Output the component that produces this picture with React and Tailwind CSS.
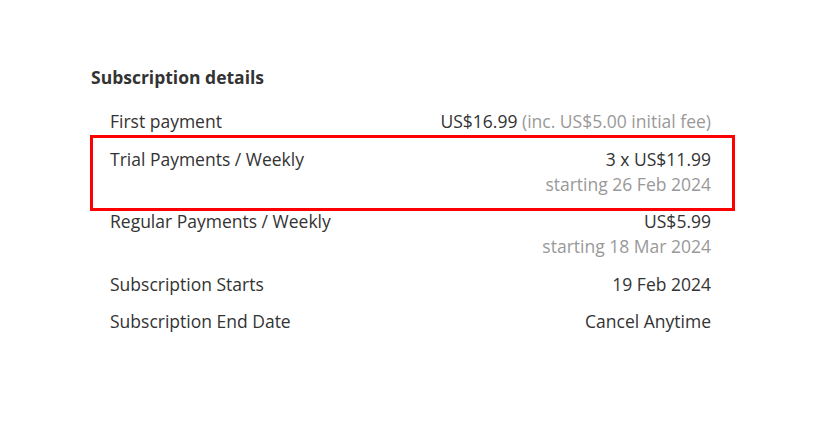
const rows = [
  { label: "First payment", value: "US$16.99", note: "(inc. US$5.00 initial fee)", inline: true },
  { label: "Trial Payments / Weekly", value: "3 x US$11.99", sub: "starting 26 Feb 2024", highlight: true },
  { label: "Regular Payments / Weekly", value: "US$5.99", sub: "starting 18 Mar 2024" },
  { label: "Subscription Starts", value: "19 Feb 2024" },
  { label: "Subscription End Date", value: "Cancel Anytime" },
];

const Row = ({ row }) => (
  <div className="relative flex justify-between py-[6.25px]">
    {row.highlight && (
      <div className="absolute top-[-6px] bottom-[-8px] left-[-20px] right-[-24px] border-[3px] border-[#ff0000] pointer-events-none" />
    )}
    <div>{row.label}</div>
    <div className="text-right">
      <div>
        {row.value}
        {row.inline && <span className="text-[#999999]"> {row.note}</span>}
      </div>
      {row.sub && <div className="text-[#999999]">{row.sub}</div>}
    </div>
  </div>
);

export default function App() {
  return (
    <div className="min-h-[433px] w-[832px] bg-white pt-[65px] text-[17.5px] leading-[25px] text-[#333333] font-['Open_Sans',sans-serif]">
      <div className="ml-[91px] w-[644px]">
        <h2 className="mb-[13px] font-bold">Subscription details</h2>
        <div className="pl-[19px] pr-[24px]">
          {rows.map((row) => (
            <Row key={row.label} row={row} />
          ))}
        </div>
      </div>
    </div>
  );
}
